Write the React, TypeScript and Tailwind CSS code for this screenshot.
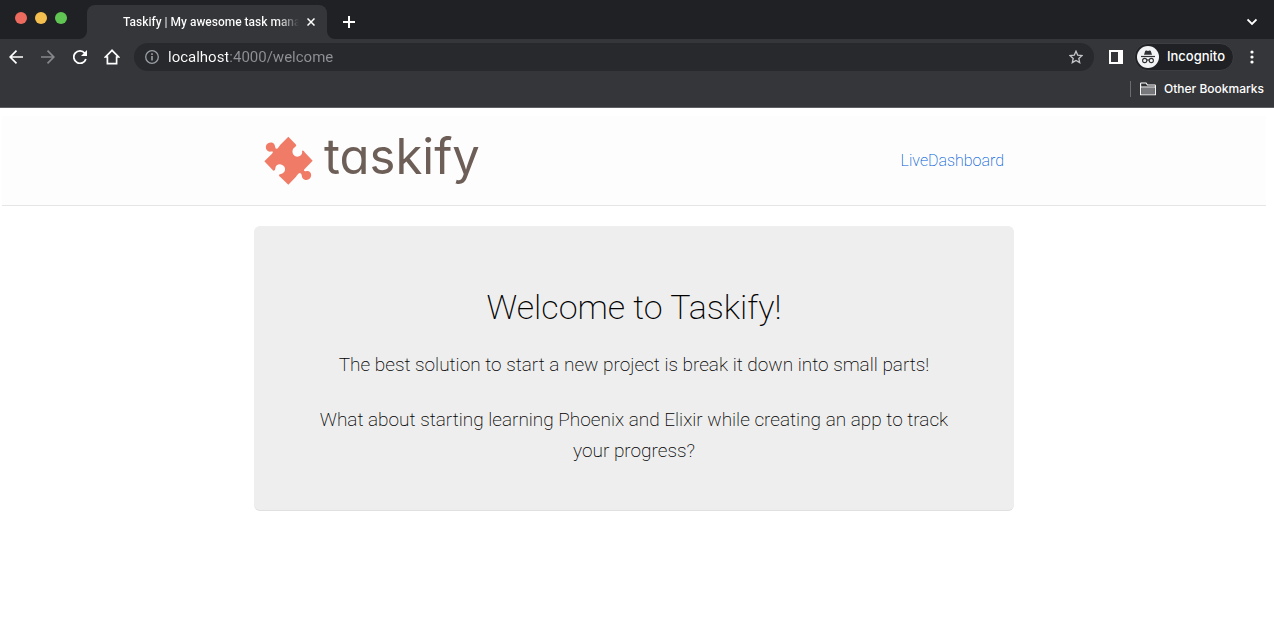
import React from "react";

function IconButton({ label, children }: { label: string; children: React.ReactNode }) {
  return (
    <button type="button" aria-label={label} className="flex size-5 shrink-0 items-center justify-center">
      {children}
    </button>
  );
}

function TabStrip() {
  return (
    <div className="flex h-[39px] items-end bg-[#202124] text-white">
      <div className="flex w-[79px] shrink-0 gap-2 self-start pt-3 pl-[15px]">
        <button type="button" aria-label="Close window" className="size-3 rounded-full bg-[#ec6a5e]" />
        <button type="button" aria-label="Minimize window" className="size-3 rounded-full bg-[#f4bf4f]" />
        <button type="button" aria-label="Zoom window" className="size-3 rounded-full bg-[#61c554]" />
      </div>
      <svg className="size-2 shrink-0" viewBox="0 0 8 8" aria-hidden="true">
        <path d="M0 8A8 8 0 0 0 8 0V8Z" fill="#35363a" />
      </svg>
      <div className="flex h-[34px] w-60 shrink-0 items-center rounded-t-lg bg-[#35363a] pr-2 pl-9">
        <span className="w-44 overflow-hidden bg-linear-to-r from-white from-88% to-transparent bg-clip-text font-[Roboto] text-[12px] font-medium whitespace-nowrap text-transparent">
          Taskify | My awesome task manager
        </span>
        <IconButton label="Close tab">
          <svg className="ml-1 size-2" viewBox="0 0 8 8" fill="none" stroke="white" strokeWidth="1.5">
            <path d="M.5.5l7 7M7.5.5l-7 7" />
          </svg>
        </IconButton>
      </div>
      <svg className="size-2 shrink-0" viewBox="0 0 8 8" aria-hidden="true">
        <path d="M0 0A8 8 0 0 0 8 8H0Z" fill="#35363a" />
      </svg>
      <div className="flex h-[34px] grow items-center justify-between pr-3 pl-1">
        <IconButton label="New tab">
          <svg className="size-3" viewBox="0 0 12 12" fill="none" stroke="white" strokeWidth="2">
            <path d="M6 0v12M0 6h12" />
          </svg>
        </IconButton>
        <IconButton label="Search tabs">
          <svg className="size-[10px]" viewBox="0 0 10 10" fill="none" stroke="white" strokeWidth="1.8">
            <path d="M.5 2.5L5 7l4.500-4.500" />
          </svg>
        </IconButton>
      </div>
    </div>
  );
}

function Toolbar() {
  return (
    <div className="flex h-9 items-center gap-3 bg-[#35363a] pr-3 pl-[6px] text-white">
      <IconButton label="Back">
        <svg className="size-[14px]" viewBox="0 0 14 14" fill="none" stroke="white" strokeWidth="1.700">
          <path d="M14 7H1.500M7.500.7L1.200 7l6.300 6.300" />
        </svg>
      </IconButton>
      <IconButton label="Forward">
        <svg className="size-[14px]" viewBox="0 0 14 14" fill="none" stroke="#87888b" strokeWidth="1.700">
          <path d="M0 7h12.500M6.500.7L12.800 7l-6.300 6.300" />
        </svg>
      </IconButton>
      <IconButton label="Reload">
        <svg className="size-[14px]" viewBox="0 0 14 14" fill="none">
          <path d="M11.800 3.200A6.200 6.200 0 1 0 12.900 9" stroke="white" strokeWidth="1.800" />
          <path d="M14 0v6H8Z" fill="white" />
        </svg>
      </IconButton>
      <IconButton label="Home">
        <svg className="size-4" viewBox="0 0 16 16" fill="none" stroke="white" strokeWidth="1.700">
          <path d="M8 1.300L1.500 8H3.400v6.600h9.200V8h1.900Z" />
        </svg>
      </IconButton>
      <div className="flex h-7 min-w-0 grow items-center gap-[9px] rounded-full bg-[#28292c] pr-2 pl-[11px]">
        <svg className="size-[14px] shrink-0" viewBox="0 0 14 14" aria-hidden="true">
          <circle cx="7" cy="7" r="6.300" fill="none" stroke="#9aa0a6" strokeWidth="1.300" />
          <path d="M6.200 6h1.600v4.500H6.200ZM6.200 3.300h1.600v1.600H6.200Z" fill="#9aa0a6" />
        </svg>
        <input
          type="text"
          aria-label="Address"
          defaultValue="localhost:4000/welcome"
          className="min-w-0 grow bg-linear-to-r from-white from-[60px] to-[#8e9196] to-[60px] bg-clip-text font-[Roboto] text-[15px] text-transparent outline-none"
        />
        <IconButton label="Bookmark this page">
          <svg className="size-[14px]" viewBox="0 0 14 14" fill="none" stroke="#c4c5c8" strokeWidth="1.300">
            <path d="M7 1.200l1.700 3.900 4.300.4-3.200 2.900.9 4.200L7 10.400l-3.700 2.200.9-4.200L1 5.500l4.300-.4Z" />
          </svg>
        </IconButton>
      </div>
      <IconButton label="Side panel">
        <svg className="size-[14px]" viewBox="0 0 14 14" aria-hidden="true">
          <path fillRule="evenodd" d="M0 0h14v14H0ZM2 2v10h7V2Z" fill="white" />
        </svg>
      </IconButton>
      <div className="-ml-1 flex shrink-0 items-center gap-2">
        <button
          type="button"
          className="flex h-7 items-center gap-2 rounded-full border border-[#3d3e42] bg-[#202124] pr-2 pl-[2px] text-[13px] font-medium"
        >
          <svg className="size-[22px]" viewBox="0 0 22 22" aria-hidden="true">
            <circle cx="11" cy="11" r="11" fill="#f1f3f4" />
            <path d="M7 8.800l1.200-3.700c.2-.6.7-.8 1.200-.6l1.600.5 1.600-.5c.5-.2 1 0 1.200.6L15 8.800Z" fill="#303134" />
            <path d="M4 10.500h14" stroke="#303134" strokeWidth="1.200" />
            <g fill="none" stroke="#303134" strokeWidth="1.100">
              <circle cx="7.700" cy="14.500" r="2.100" />
              <circle cx="14.300" cy="14.500" r="2.100" />
              <path d="M9.800 14.300q1.200-.8 2.400 0" />
            </g>
          </svg>
          Incognito
        </button>
        <IconButton label="Menu">
          <svg className="h-[14px] w-1" viewBox="0 0 4 14" fill="white">
            <circle cx="2" cy="2" r="1.600" />
            <circle cx="2" cy="7" r="1.600" />
            <circle cx="2" cy="12" r="1.600" />
          </svg>
        </IconButton>
      </div>
    </div>
  );
}

function BookmarksBar() {
  return (
    <div className="flex h-[33px] items-start justify-end border-b border-[#5f6063] bg-[#35363a] pt-[6px] pr-[10px] text-white">
      <button type="button" className="flex items-center gap-2 text-xs font-medium">
        <span className="mr-px h-4 w-px bg-[#6b6c70]" />
        <svg className="h-[14px] w-4" viewBox="0 0 16 14" aria-hidden="true">
          <path d="M.6 1.500Q.6 1 1.200 1H6l1.500 2h7.300q.6 0 .6.600v9.200H.6Z" fill="#303134" stroke="white" strokeWidth="1.100" />
          <path d="M1.200 5.500h13.600v6.700H1.200Z" fill="#77787b" />
          <path d="M1 5h14" stroke="white" />
        </svg>
        Other Bookmarks
      </button>
    </div>
  );
}

function Logo() {
  return (
    <a href="#home" className="flex items-center gap-[10px] text-[#6d5f57]">
      <svg className="size-[50px]" viewBox="42 48 150 150" aria-hidden="true">
        <path
          fill="#f07c68"
          d="M115 50L137 73C143 80 131 81 128 90C125 101 133 110 143 110C154 109 158 100 156 94C157 89 162 93 164 97L188 122L164 147C158 154 166 154 173 153C182 155 186 163 182 172C177 182 164 183 158 175C154 169 157 160 149 159C145 160 141 166 138 170L115 194L91 171C84 165 87 162 95 161C104 158 108 148 103 140C97 131 85 130 79 137C74 143 78 152 70 152L43 124L66 101C72 95 68 94 60 95C51 94 46 86 48 77C52 67 65 64 72 71C76 76 75 84 78 86C83 88 86 80 91 74Z"
        />
      </svg>
      <span className="pb-2 text-[49px] leading-[48px] [font-feature-settings:'cv11']">taskify</span>
    </a>
  );
}

export default function App() {
  return (
    <div className="min-h-screen bg-white font-[Inter,sans-serif] text-black">
      <TabStrip />
      <Toolbar />
      <BookmarksBar />
      <div className="pt-2 pr-2 pl-[2px]">
        <header className="border-b border-[#e5e5e5] bg-[#fdfdfd]">
          <div className="mx-auto flex h-[89px] max-w-[760px] items-center justify-between px-[10px]">
            <Logo />
            <a href="#dashboard" className="font-[Roboto] text-base font-extralight text-[#0060d8]">
              LiveDashboard
            </a>
          </div>
        </header>
        <main className="mx-auto mt-5 max-w-[760px] rounded-md border-b border-[#e0e0e0] bg-[#eeeeee] px-[60px] pt-[60px] pb-11 text-center font-[Roboto]">
          <h1 className="text-[34px] leading-[43px] font-extralight">Welcome to Taskify!</h1>
          <p className="mt-5 text-[19px] leading-[31px] font-extralight">
            The best solution to start a new project is break it down into small parts!
          </p>
          <p className="mt-6 text-[19px] leading-[31px] font-extralight">
            What about starting learning Phoenix and Elixir while creating an app to track your progress?
          </p>
        </main>
      </div>
    </div>
  );
}
